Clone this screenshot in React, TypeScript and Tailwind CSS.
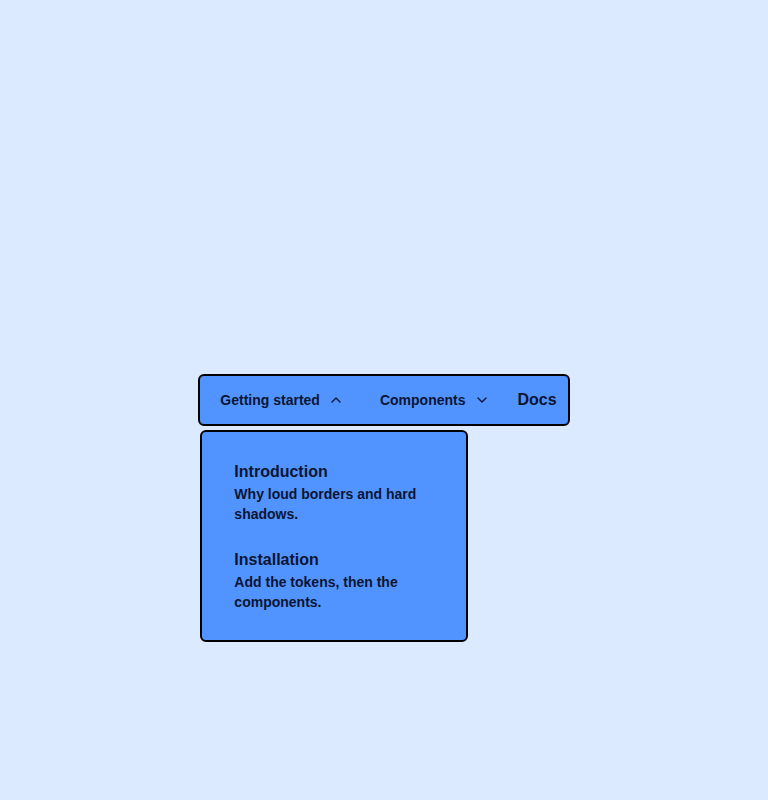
import React, { useState } from "react";
import { ChevronDown, ChevronUp } from "lucide-react";

const items = [
  { title: "Introduction", desc: "Why loud borders and hard shadows." },
  { title: "Installation", desc: "Add the tokens, then the components." },
];

const App = () => {
  const [open, setOpen] = useState(true);

  return (
    <div
      className="flex h-[800px] w-full items-center justify-center bg-[#dbeafe] text-[#0b1533]"
      style={{ fontFamily: '"Liberation Sans", Arial, sans-serif' }}
    >
      <nav className="relative flex h-[52px] items-center rounded-md border-2 border-black bg-[#5294ff] pl-1 pr-[11px]">
        <button
          type="button"
          onClick={() => setOpen(!open)}
          className="flex h-10 items-center gap-2 px-4 text-sm font-bold"
        >
          Getting started
          {open ? (
            <ChevronUp size={16} strokeWidth={2} />
          ) : (
            <ChevronDown size={16} strokeWidth={2} />
          )}
        </button>
        <button
          type="button"
          className="ml-1 flex h-10 items-center gap-2 px-4 text-sm font-bold"
        >
          Components
          <ChevronDown size={16} strokeWidth={2} />
        </button>
        <a href="#" className="pl-3 text-base font-bold">
          Docs
        </a>

        {open && (
          <div className="absolute left-0 top-[54px] w-[268px] rounded-md border-2 border-black bg-[#5294ff] p-4">
            <ul className="flex flex-col">
              {items.map((item) => (
                <li key={item.title} className="px-4 py-3">
                  <div className="text-base font-bold leading-6">{item.title}</div>
                  <p className="text-sm font-bold leading-5">{item.desc}</p>
                </li>
              ))}
            </ul>
          </div>
        )}
      </nav>
    </div>
  );
};

export default App;
